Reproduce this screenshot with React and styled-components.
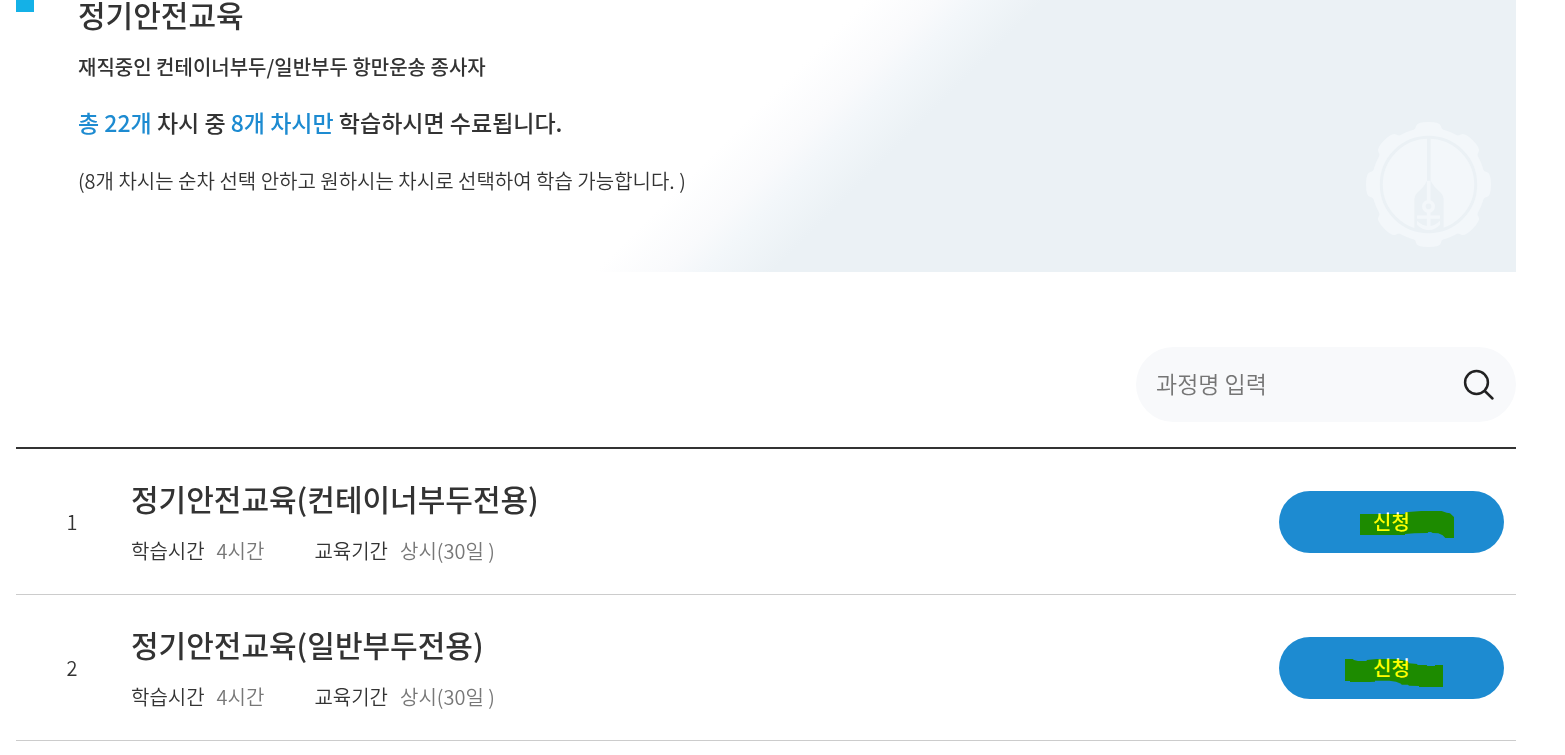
// src/App.jsx
import React, { useState } from "react";
import styled, { createGlobalStyle } from "styled-components";

const GlobalStyle = createGlobalStyle`
    *{ box-sizing:border-box; }
    body{ margin:0; background:#fff; color:#333; font-family:"Noto Sans CJK KR", "Noto Sans", sans-serif; font-size:20px; font-weight:350; line-height:30px; }
    h2, h3, p, ol, dl, dd{ margin:0; padding:0; }
    input, button{ font-family:inherit; }
`;

const Page = styled.main`
    padding: 0 49px 14px 16px;
`;

const Banner = styled.section`
    display:flex; align-items:flex-start; height:272px;
    background: linear-gradient(135deg, #fff 48%, #f9fafc 52%, #f3f7fa 54%, #ebf1f5 58%);
`;

const Marker = styled.span`
    flex:none; width:18px; height:12px; background:#14b1e7;
`;

const Intro = styled.div`
    flex:1; margin-left:44px;
`;

const BannerTitle = styled.h2`
    font-size:30px; font-weight:500; line-height:28px;
`;

const Target = styled.p`
    margin-top:24px; font-weight:500;
`;

const Notice = styled.p`
    margin-top:25px; font-size:23px; font-weight:500;
    em{ font-style:normal; color:#1d8bd1; }
`;

const Hint = styled.p`
    margin-top:29px;
`;

const Emblem = styled.svg`
    flex:none; align-self:flex-end; width:125px; height:125px; margin:0 25px 25px 0;
`;

const SearchForm = styled.form`
    display:flex; align-items:center; width:380px; height:75px; margin:75px 0 25px auto;
    padding:0 20px; border-radius:38px; background:#f8f9fb;
`;

const SearchInput = styled.input`
    flex:1; min-width:0; padding:0 0 4px; border:0; outline:0; background:transparent;
    font-size:23px; font-weight:350; line-height:30px; color:#333;
    &::placeholder{ color:#757575; opacity:1; }
`;

const SearchButton = styled.button`
    display:flex; padding:0; border:0; background:none; cursor:pointer;
    svg{ width:34px; height:34px; }
`;

const CourseList = styled.ol`
    list-style:none; border-top:2px solid #333;
`;

const CourseRow = styled.li`
    display:flex; align-items:center; min-height:146px; padding-right:12px; border-bottom:1px solid #ccc;
`;

const No = styled.span`
    flex:none; width:112px; margin-right:3px; text-align:center;
`;

const Info = styled.div`
    flex:1; min-width:0;
`;

const CourseTitle = styled.h3`
    margin-bottom:18px; font-size:30px; font-weight:500; line-height:40px;
`;

const Meta = styled.dl`
    display:flex; gap:50px;
    div{ display:flex; gap:12px; }
    dd{ color:#777; }
`;

const ApplyButton = styled.button`
    position:relative; flex:none; width:225px; height:62px; padding:0; border:0; border-radius:31px;
    background:#1d8bd1; color:#fff; font-size:20px; font-weight:500; line-height:30px; cursor:pointer;
`;

const Marking = styled.svg`
    position:absolute; inset:0; width:100%; height:100%; mix-blend-mode:multiply; pointer-events:none;
`;

const courses = [
    {
        id: 1,
        title: "정기안전교육(컨테이너부두전용)",
        time: "4시간",
        period: "상시(30일 )",
        markBox: "57 33 675 186",
        mark: "M300 102H435V97L483 93H545L560 98L570 100L582 111V174H556L548 166L535 160L518 159L513 156H505L503 159L463 160L435 162V165H300Z",
    },
    {
        id: 2,
        title: "정기안전교육(일반부두전용)",
        time: "4시간",
        period: "상시(30일 )",
        markBox: "57 51 675 186",
        mark: "M255 117H278L282 120L294 123H320V120L350 117H410L443 123L447 130L472 132V135H500L502 138H525V135H549V201H477V198L447 197L444 194L425 194L423 191L408 185L388 182H345V185L330 186H270V183H255Z",
    },
];

const teeth = [0, 45, 90, 135, 180, 225, 270, 315];

function PortEmblem() {
    return (
        <Emblem viewBox="78 65 375 376" aria-hidden="true">
            <g fill="#f3f7fa">
                <circle cx="265.5" cy="253" r="171" />
                {teeth.map((deg) => (
                    <path
                        key={deg}
                        transform={`rotate(${deg} 265.5 253)`}
                        d="M215 92Q226 88 228 78Q230 65 265.5 65Q301 65 303 78Q305 88 316 92L265.5 130Z"
                    />
                ))}
            </g>
            <circle cx="265.5" cy="253" r="142" fill="none" stroke="#ebf1f5" strokeWidth="9" />
            <path d="M261 112H272V242Q282 262 301 276Q311 285 311 296V386Q266 402 223 386V296Q223 285 233 276Q252 262 261 242Z" fill="#ebf1f5" />
            <g fill="none" stroke="#f3f7fa" strokeWidth="11">
                <path d="M266 242V304" />
                <circle cx="265.5" cy="319" r="14" />
                <path d="M266 333V384" />
                <path d="M231 351H300" strokeWidth="10" />
            </g>
            <path d="M231 362Q247 378 266 378Q285 378 300 362V374Q285 390 266 390Q247 390 231 374Z" fill="#f3f7fa" />
        </Emblem>
    );
}

export default function App() {
    const [keyword, setKeyword] = useState("");

    return (
        <>
            <GlobalStyle />
            <Page>
                <Banner>
                    <Marker />
                    <Intro>
                        <BannerTitle>정기안전교육</BannerTitle>
                        <Target>재직중인 컨테이너부두/일반부두 항만운송 종사자</Target>
                        <Notice>
                            <em>총 22개</em> 차시 중 <em>8개 차시만</em> 학습하시면 수료됩니다.
                        </Notice>
                        <Hint>(8개 차시는 순차 선택 안하고 원하시는 차시로 선택하여 학습 가능합니다. )</Hint>
                    </Intro>
                    <PortEmblem />
                </Banner>

                <SearchForm onSubmit={(e) => e.preventDefault()}>
                    <SearchInput
                        type="text"
                        aria-label="과정명"
                        placeholder="과정명 입력"
                        value={keyword}
                        onChange={(e) => setKeyword(e.target.value)}
                    />
                    <SearchButton type="submit" aria-label="검색">
                        <svg viewBox="0 0 34 34" fill="none" stroke="#222" strokeWidth="2.5" strokeLinecap="round">
                            <circle cx="14.5" cy="14.5" r="11.4" />
                            <path d="M22.8 23L30.5 30.5" />
                        </svg>
                    </SearchButton>
                </SearchForm>

                <CourseList>
                    {courses.map((c) => (
                        <CourseRow key={c.id}>
                            <No>{c.id}</No>
                            <Info>
                                <CourseTitle>{c.title}</CourseTitle>
                                <Meta>
                                    <div>
                                        <dt>학습시간</dt>
                                        <dd>{c.time}</dd>
                                    </div>
                                    <div>
                                        <dt>교육기간</dt>
                                        <dd>{c.period}</dd>
                                    </div>
                                </Meta>
                            </Info>
                            <ApplyButton type="button">
                                신청
                                <Marking viewBox={c.markBox} aria-hidden="true">
                                    <path d={c.mark} fill="#ff0" />
                                </Marking>
                            </ApplyButton>
                        </CourseRow>
                    ))}
                </CourseList>
            </Page>
        </>
    );
}
